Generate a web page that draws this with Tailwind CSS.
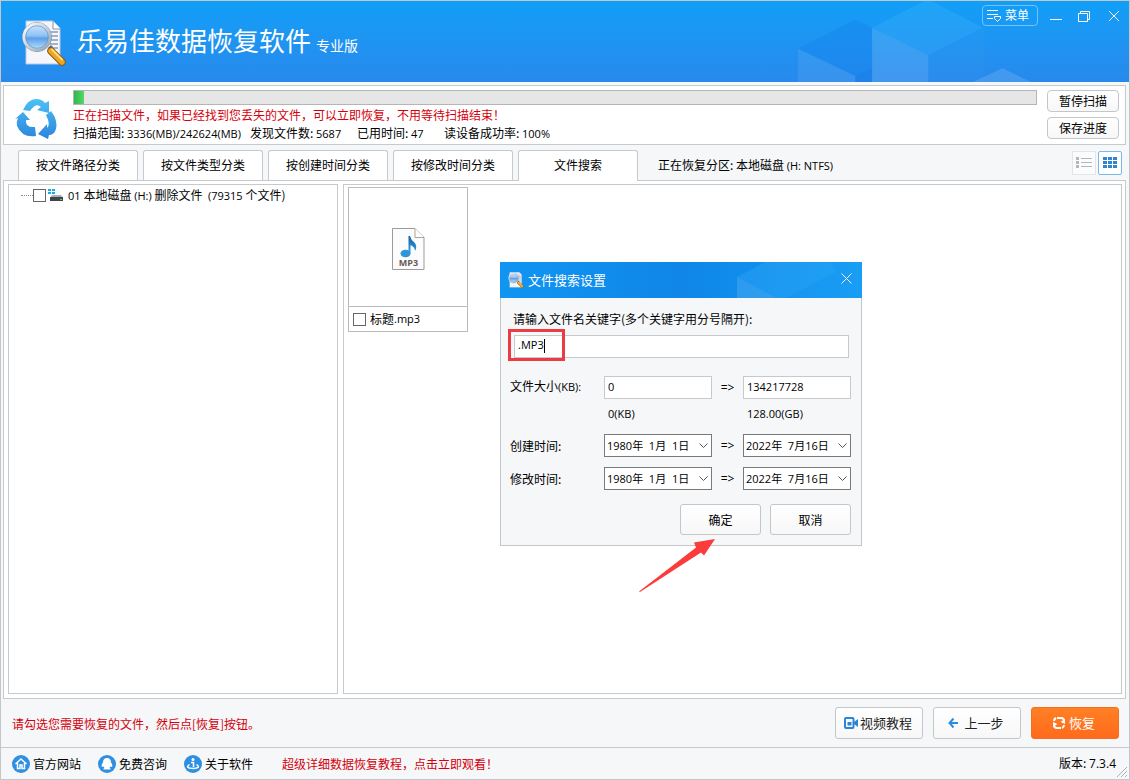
<!DOCTYPE html>
<html lang="zh-CN">
<head>
<meta charset="utf-8">
<meta name="viewport" content="width=device-width, initial-scale=1">
<title>乐易佳数据恢复软件</title>
<script src="https://cdn.jsdelivr.net/npm/@tailwindcss/browser@4"></script>
</head>
<body class="relative flex min-h-screen flex-col border border-[#c3c7ca] bg-[#f5f7f9] font-['Noto_Sans_CJK_SC',sans-serif] text-xs leading-4 text-black">

<svg class="absolute size-0" aria-hidden="true">
  <defs>
    <linearGradient id="lens" x1="0" y1="0" x2="0" y2="1"><stop offset="0" stop-color="#d9ecfd"/><stop offset=".45" stop-color="#8fc3f6"/><stop offset=".55" stop-color="#5f9eea"/><stop offset="1" stop-color="#c8f0ff"/></linearGradient>
    <linearGradient id="rim" x1="0" y1="0" x2="1" y2="1"><stop offset="0" stop-color="#ffffff"/><stop offset="1" stop-color="#8fa3bb"/></linearGradient>
    <linearGradient id="recycle" gradientUnits="userSpaceOnUse" x1="0" y1="0" x2="0" y2="42"><stop offset="0" stop-color="#4cc3f5"/><stop offset="1" stop-color="#2b83dd"/></linearGradient>
    <linearGradient id="note" x1="0" y1="0" x2="0" y2="1"><stop offset="0" stop-color="#1d5f9c"/><stop offset="1" stop-color="#2ea3e8"/></linearGradient>
    <symbol id="logo" viewBox="0 0 46 46">
      <path d="M5 1h27l7 7v36H5z" fill="#f4f6fc" stroke="#b9c6dd"/>
      <path d="M32 1v8h7" fill="#fff" stroke="#8292ae"/>
      <path d="M28 12h9M29 16h8M30 20h7M29 24h8M28 28h9" stroke="#8b9ab4" stroke-width="1.5"/>
      <circle cx="16" cy="17" r="14.5" fill="url(#lens)" stroke="#7388a3"/>
      <circle cx="16" cy="17" r="13" fill="none" stroke="url(#rim)" stroke-width="3"/>
      <circle cx="16" cy="17" r="11.3" fill="none" stroke="#6d8fb8" stroke-width=".7"/>
      <path d="M28 29l3-3" stroke="#5d6c80" stroke-width="3"/>
      <path d="M30 31l11 11" stroke="#8a5a12" stroke-width="7.5" stroke-linecap="round"/>
      <path d="M30 31l11 11" stroke="#f0a31d" stroke-width="5.5" stroke-linecap="round"/>
      <path d="M31 29.500l10 10" stroke="#ffe07c" stroke-width="1.800" stroke-linecap="round"/>
    </symbol>
  </defs>
</svg>

<header class="relative flex h-[81px] items-start justify-between bg-linear-to-b from-[#0f9ff8] to-[#2789ec] pl-5 text-white">
  <svg class="absolute top-0 right-0 h-full w-[340px]" viewBox="0 0 340 82" aria-hidden="true">
    <path d="M7 48L65 19l17 8v41l-17 8z" fill="#1583ee" opacity=".4"/>
    <path d="M7 48l58 28v6H7z" fill="#fff" opacity=".08"/>
    <path d="M65 76l17-8v14H65z" fill="#1173e6" opacity=".35"/>
    <path d="M82 27L135 0h7l52 27-55 28z" fill="#4fc4ff" opacity=".2"/>
    <path d="M82 27l57 28v27H82z" fill="#fff" opacity=".12"/>
    <path d="M139 55l57-28v55h-57z" fill="#fff" opacity=".02"/>
    <path d="M184 82l30-14 29 14z" fill="#fff" opacity=".13"/>
  </svg>
  <div class="relative flex items-center">
    <svg class="mt-[19px] size-[46px]" aria-hidden="true"><use href="#logo"/></svg>
    <h1 class="mt-3 ml-2.5 text-[26px] leading-8 font-normal">乐易佳数据恢复软件</h1>
    <span class="mt-[22px] ml-[5px] text-sm leading-5">专业版</span>
  </div>
  <div class="relative mt-1 mr-[9px] flex items-center">
    <button class="mr-3 flex h-[21px] w-14 items-center justify-center gap-1 rounded-sm border border-[#72c4fb] pr-1 pb-px">
      <svg class="size-[14px]" viewBox="0 0 14 14" fill="none" stroke="#fff" aria-hidden="true"><path d="M0 2.500h11M0 6.500h11M0 10.500h6M7.500 8.500h6v2l-3 3-3-3z"/></svg>菜单</button>
    <button aria-label="最小化" class="mr-4 w-3"><svg class="h-4 w-3" viewBox="0 0 12 16" stroke="#fff" fill="none"><path d="M0 11.500h12"/></svg></button>
    <button aria-label="还原" class="mr-[18px] w-3"><svg class="h-4 w-3" viewBox="0 0 12 16" stroke="#fff" fill="none"><path d="M.5 5.500h9v8h-9zM2.500 5.500v-2h9v8h-2"/></svg></button>
    <button aria-label="关闭" class="w-3"><svg class="h-4 w-3" viewBox="0 0 12 16" stroke="#fff" fill="none"><path d="M1 3l10 10M11 3L1 13"/></svg></button>
  </div>
</header>

<main class="flex flex-1 flex-col px-0.5 pt-[3px]">
  <section class="mr-px flex h-[60px] border border-[#c6cacd] bg-white">
    <svg class="mt-3 ml-2.5 h-[42px] w-11 shrink-0" viewBox="0 0 44 42" fill="url(#recycle)" aria-hidden="true">
      <path d="M9 12Q14 1 22 1q6 0 9 4l4-2v12l-12-3 4-3q-5-5-11 4z"/>
      <path d="M1 21l8-7 7 8h-4q-1 8 9 7l1 9Q8 40 3 28q-1-4 1-8z"/>
      <path d="M32 17l5-4q7 9 5 18-2 6-7 6l-1 4-10-5 9-10v4q4-3-1-13z"/>
    </svg>
    <div class="ml-[15px] min-w-0 flex-1">
      <div role="progressbar" aria-label="扫描进度" aria-valuenow="1" class="mt-1 h-[15px] border border-[#b5b5b5] bg-[#e6e6e6]"><div class="h-full w-[10px] bg-linear-to-r from-[#2fb84a] to-[#55d768]"></div></div>
      <p class="mt-px h-[18px] leading-[18px] text-[#d4000c]">正在扫描文件，如果已经找到您丢失的文件，可以立即恢复，不用等待扫描结束！</p>
      <p class="flex h-[18px] leading-[18px] whitespace-nowrap">
        <span class="w-[177px]">扫描范围: <span class="font-['Open_Sans'] text-[11px]">3336(MB)/242624(MB)</span></span>
        <span class="w-[107px]">发现文件数: <span class="font-['Open_Sans'] text-[11px]">5687</span></span>
        <span class="w-[87px]">已用时间: <span class="font-['Open_Sans'] text-[11px]">47</span></span>
        <span>读设备成功率: <span class="font-['Open_Sans'] text-[11px]">100%</span></span>
      </p>
    </div>
    <div class="mt-1 mr-1.5 ml-2.5 flex flex-col gap-[5px]">
      <button class="h-[22px] w-[72px] rounded-sm border border-[#c3c7ca] bg-linear-to-b from-white to-[#f7f7f7]">暂停扫描</button>
      <button class="h-[22px] w-[72px] rounded-sm border border-[#c3c7ca] bg-linear-to-b from-white to-[#f7f7f7]">保存进度</button>
    </div>
  </section>

  <nav class="relative z-10 mt-[5px] mr-px flex h-[31px] items-start gap-[5px] pl-[15px]">
    <button class="h-[30px] w-[120px] rounded-t-[3px] border border-b-0 border-[#c6cacd] bg-white pb-0.5">按文件路径分类</button>
    <button class="h-[30px] w-[120px] rounded-t-[3px] border border-b-0 border-[#c6cacd] bg-white pb-0.5">按文件类型分类</button>
    <button class="h-[30px] w-[120px] rounded-t-[3px] border border-b-0 border-[#c6cacd] bg-white pb-0.5">按创建时间分类</button>
    <button class="h-[30px] w-[120px] rounded-t-[3px] border border-b-0 border-[#c6cacd] bg-white pb-0.5">按修改时间分类</button>
    <button class="h-[31px] w-[120px] rounded-t-[3px] border border-b-0 border-[#c6cacd] bg-white pb-[3px]">文件搜索</button>
    <span class="ml-[15px] leading-[30px]">正在恢复分区: 本地磁盘 <span class="font-['Open_Sans'] text-[11px]">(H: NTFS)</span></span>
    <div class="mt-px mr-1 ml-auto flex gap-0.5">
      <button aria-label="列表" class="flex size-6 items-center justify-center border border-[#e3e6e8] bg-[#fbfcfd]"><svg class="h-3 w-4" viewBox="0 0 16 12" fill="#b4b7ba"><path d="M0 0h3v3H0zM0 4h3v3H0zM0 8h3v3H0zM5 1h11v1H5zM5 5h11v1H5zM5 9h11v1H5z"/></svg></button>
      <button aria-label="缩略图" class="flex size-6 items-center justify-center rounded-xs border border-[#79b9ea] bg-white"><svg class="h-3 w-[14px]" viewBox="0 0 14 12" fill="#2f86cf"><path d="M0 0h4v3H0zM5 0h4v3H5zM10 0h4v3h-4zM0 4h4v3H0zM5 4h4v3H5zM10 4h4v3h-4zM0 8h4v3H0zM5 8h4v3H5zM10 8h4v3h-4z"/></svg></button>
    </div>
  </nav>

  <section class="-mt-px mr-px flex flex-1 gap-[5px] border border-[#c6cacd] bg-white p-[3px] pb-1 pl-1">
    <div class="w-[330px] shrink-0 border border-[#c6cacd] pl-3">
      <label class="mt-0.5 flex h-4 items-center whitespace-nowrap">
        <span class="w-3 border-t border-dotted border-[#8a8a8a]"></span>
        <input type="checkbox" class="size-[13px] appearance-none border border-[#666] bg-white">
        <svg class="ml-0.5 h-[14px] w-4" viewBox="0 0 16 14" aria-hidden="true"><path d="M0 1h3v2H0zM4 1h3v2H4zM0 4h3v2H0zM4 4h3v2H4z" fill="#13aee4"/><path d="M4 7h9l2 3H2z" fill="#a9b0b4"/><path d="M2 9h13v4H2z" fill="#3e4649"/><path d="M12 11h2v1h-2z" fill="#43e06a"/></svg>
        <span class="ml-1 whitespace-pre"><span class="font-['Open_Sans'] text-[11px]">01 </span>本地磁盘 <span class="font-['Open_Sans'] text-[11px]">(H:) </span>删除文件  <span class="font-['Open_Sans'] text-[11px]">(79315 </span>个文件)</span>
      </label>
    </div>
    <div class="flex-1 border border-[#c6cacd] pt-0.5 pl-1">
      <div class="w-[120px] border border-[#bbb]">
        <div class="flex h-[118px] items-center justify-center pt-1">
          <svg class="h-[42px] w-[33px]" viewBox="0 0 33 42" role="img" aria-label="MP3">
            <path d="M.5 .5H23l9 9V41.500H.5z" fill="#fcfcfc" stroke="#9b9b9b"/>
            <path d="M23 .5v9h9" fill="#fff" stroke="#aaa39b"/>
            <path d="M16.500 8h1.500q1 4 4 6 4 4 1 9 0-4-4.500-6v8.500h-2z" fill="url(#note)"/>
            <ellipse cx="13.500" cy="25.500" rx="5" ry="3.800" fill="#2f94d8"/>
            <text x="16.500" y="38" text-anchor="middle" font-family="Open Sans" font-weight="700" font-size="9" fill="#655d58">MP3</text>
          </svg>
        </div>
        <label class="flex h-[25px] items-center border-t border-[#bbb] pl-1">
          <input type="checkbox" class="mr-1 size-[13px] appearance-none border border-[#666] bg-white">标题<span class="font-['Open_Sans'] text-[11px]">.mp3</span>
        </label>
      </div>
    </div>
  </section>
</main>

<section class="flex h-[49px] items-center gap-2.5 border-b border-[#c6cacd] pr-2.5 pl-[11px] text-[13px]">
  <p class="mt-0.5 mr-auto text-xs text-[#d4000c]">请勾选您需要恢复的文件，然后点[恢复]按钮。</p>
  <button class="flex h-8 w-[88px] items-center justify-center gap-0.5 rounded-[3px] border border-[#c3c7ca] bg-linear-to-b from-white to-[#f7f7f7] pr-0.5 text-[#222]">
    <svg class="h-3 w-[14px]" viewBox="0 0 14 12" aria-hidden="true"><rect x="1" y="1" width="8.500" height="10" rx="1" fill="none" stroke="#2a85d6" stroke-width="2"/><path d="M3.500 5h4v3.500h-4zM10 5l4-3v8l-4-3z" fill="#2a85d6"/></svg>视频教程</button>
  <button class="flex h-8 w-[88px] items-center justify-center gap-1.5 rounded-[3px] border border-[#c3c7ca] bg-linear-to-b from-white to-[#f7f7f7] pr-0.5 text-[#222]">
    <svg class="size-2.5" viewBox="0 0 10 10" fill="none" stroke="#2a8ce2" stroke-width="2" aria-hidden="true"><path d="M5.500 .5L1.500 5l4 4.500M1.500 5H10"/></svg>上一步</button>
  <button class="flex h-8 w-[88px] items-center justify-center gap-1 rounded-[3px] border border-[#f4701c] bg-linear-to-b from-[#ff8024] to-[#ff6a1c] pr-0.5 text-white">
    <svg class="h-[14px] w-3" viewBox="0 0 12 14" fill="none" stroke="#fff" stroke-width="2" aria-hidden="true"><path d="M4 2h4q3 0 3 3v1M8 12H4q-3 0-3-3V8"/><path d="M12 3v5L7.500 6zM0 11V6l4.500 2z" fill="#fff" stroke="none"/><path d="M1 5q0-2 2-3M11 9q0 2-2 3"/></svg>恢复</button>
</section>

<footer class="relative flex h-[31px] items-center pr-[13px] pl-[11px]">
  <a href="#" class="mr-[17px] flex items-center gap-[3px]"><svg class="size-[18px]" viewBox="0 0 18 18" aria-hidden="true"><circle cx="9" cy="9" r="9" fill="#2f8fe0"/><path d="M3.500 9L9 4l5.500 5M5.500 8v5.500H8V10h2v3.500h2.500V8" fill="none" stroke="#fff" stroke-width="1.500"/></svg>官方网站</a>
  <a href="#" class="mr-[17px] flex items-center gap-[3px]"><svg class="size-[18px]" viewBox="0 0 18 18" aria-hidden="true"><circle cx="9" cy="9" r="9" fill="#2f8fe0"/><path d="M9 3q4 0 4 4.500 2 2.500 1 4.500l-1.500-.5-1 1.500q1.500.5 1 1.500h-7q-.5-1 1-1.500l-1-1.500L4 12q-1-2 1-4.500Q5 3 9 3z" fill="#fff"/></svg>免费咨询</a>
  <a href="#" class="flex items-center gap-[3px]"><svg class="size-[18px]" viewBox="0 0 18 18" aria-hidden="true"><circle cx="9" cy="9" r="9" fill="#2f8fe0"/><circle cx="9" cy="4.500" r="1.500" fill="#fff"/><path d="M7 7.500h2.500V12M5.500 9.500q-5 3.500 3.500 4 8.500-.5 3.500-4" fill="none" stroke="#fff" stroke-width="1.500"/></svg>关于软件</a>
  <a href="#" class="ml-[29px] text-[#d4000c]">超级详细数据恢复教程，点击立即观看！</a>
  <span class="ml-auto">版本: <span class="font-['Open_Sans']">7.3.4</span></span>
  <svg class="absolute right-0.5 bottom-0.5 size-2.5" viewBox="0 0 10 10" stroke="#aeb2b5" aria-hidden="true"><path d="M0 10L10 0M4 10l6-6M8 10l2-2"/></svg>
</footer>

<div role="dialog" aria-labelledby="dlg-title" class="absolute top-[261px] left-[499px] z-20 w-[362px] border border-[#c3c7ca] bg-[#f5f7f9]">
  <div class="relative -mx-px -mt-px flex h-9 items-center bg-linear-to-r from-[#1195f2] via-[#0f86e8] to-[#129af5] pl-2 text-[13px] text-white">
    <svg class="absolute top-0 right-0 h-full w-[125px]" viewBox="0 0 125 36" aria-hidden="true"><path d="M0 15L28 0h97v36H0z" fill="#fff" opacity=".03"/><path d="M0 15l40 21H0z" fill="#fff" opacity=".1"/><path d="M0 15L28 0h65l6 10-50 26h-9z" fill="#4cc4ff" opacity=".12"/></svg>
    <svg class="relative size-4" aria-hidden="true"><use href="#logo"/></svg>
    <h2 id="dlg-title" class="relative ml-1">文件搜索设置</h2>
    <button aria-label="关闭" class="relative mr-2.5 mb-1 ml-auto"><svg class="size-[11px]" viewBox="0 0 11 11" stroke="#fff" fill="none"><path d="M.5 .5l10 10M10.500 .5l-10 10"/></svg></button>
  </div>
  <form class="pr-[10px] pb-[10px] pl-[9px]">
    <label for="kw" class="mt-[13px] block pl-[3px]">请输入文件名关键字(多个关键字用分号隔开):</label>
    <div class="relative mt-2 mr-0.5 ml-1">
      <input id="kw" type="text" value=".MP3" class="block h-[23px] w-full border border-[#c6cacd] bg-white px-[3px] pb-1 font-['Open_Sans'] text-[11px]">
      <span class="absolute top-1 left-[30px] h-3.5 w-px bg-black"></span>
      <span class="absolute -top-[6px] -left-[6px] h-8 w-[57px] border-3 border-[#ee3a42]"></span>
    </div>
    <div class="mt-[18px] grid grid-cols-[94px_1fr_31px_1fr] items-center">
      <label for="smin" class="pb-0.5">文件大小<span class="font-['Open_Sans'] text-[11px]">(KB):</span></label>
      <input id="smin" type="text" value="0" class="h-[23px] w-full border border-[#c6cacd] bg-white px-[3px] pb-0.5 font-['Open_Sans'] text-[11px]">
      <span class="text-center font-['Open_Sans']">=&gt;</span>
      <input aria-label="最大文件大小" type="text" value="134217728" class="h-[23px] w-full border border-[#c6cacd] bg-white px-[3px] pb-0.5 font-['Open_Sans'] text-[11px]">
      <span class="col-start-2 mt-[7px] h-7 pl-1 font-['Open_Sans'] text-[11px]">0(KB)</span>
      <span class="col-start-4 mt-[7px] h-7 pl-1 font-['Open_Sans'] text-[11px]">128.00(GB)</span>
    </div>
    <div class="grid grid-cols-[94px_1fr_31px_1fr] items-center gap-y-[10px]">
      <label for="c1">创建时间:</label>
      <div class="relative"><select id="c1" class="block h-[23px] w-full appearance-none border border-[#7a7a7a] bg-white pl-0.5 font-['Open_Sans','Noto_Sans_CJK_SC'] text-[11px] whitespace-pre"><option>1980年&nbsp; 1月&nbsp; 1日</option></select><svg class="pointer-events-none absolute top-[9px] right-1 h-[6px] w-[9px]" viewBox="0 0 9 6" fill="none" stroke="#555"><path d="M.5 .5l4 4 4-4"/></svg></div>
      <span class="text-center font-['Open_Sans']">=&gt;</span>
      <div class="relative"><select aria-label="创建时间止" class="block h-[23px] w-full appearance-none border border-[#7a7a7a] bg-white pl-0.5 font-['Open_Sans','Noto_Sans_CJK_SC'] text-[11px] whitespace-pre"><option>2022年&nbsp; 7月16日</option></select><svg class="pointer-events-none absolute top-[9px] right-1 h-[6px] w-[9px]" viewBox="0 0 9 6" fill="none" stroke="#555"><path d="M.5 .5l4 4 4-4"/></svg></div>
      <label for="m1">修改时间:</label>
      <div class="relative"><select id="m1" class="block h-[23px] w-full appearance-none border border-[#7a7a7a] bg-white pl-0.5 font-['Open_Sans','Noto_Sans_CJK_SC'] text-[11px] whitespace-pre"><option>1980年&nbsp; 1月&nbsp; 1日</option></select><svg class="pointer-events-none absolute top-[9px] right-1 h-[6px] w-[9px]" viewBox="0 0 9 6" fill="none" stroke="#555"><path d="M.5 .5l4 4 4-4"/></svg></div>
      <span class="text-center font-['Open_Sans']">=&gt;</span>
      <div class="relative"><select aria-label="修改时间止" class="block h-[23px] w-full appearance-none border border-[#7a7a7a] bg-white pl-0.5 font-['Open_Sans','Noto_Sans_CJK_SC'] text-[11px] whitespace-pre"><option>2022年&nbsp; 7月16日</option></select><svg class="pointer-events-none absolute top-[9px] right-1 h-[6px] w-[9px]" viewBox="0 0 9 6" fill="none" stroke="#555"><path d="M.5 .5l4 4 4-4"/></svg></div>
    </div>
    <div class="mt-3.5 flex justify-end gap-[9px]">
      <button type="button" class="h-[31px] w-[81px] rounded-[3px] border border-[#c3c7ca] bg-linear-to-b from-white to-[#f7f7f7]">确定</button>
      <button type="button" class="h-[31px] w-[81px] rounded-[3px] border border-[#c3c7ca] bg-linear-to-b from-white to-[#f7f7f7]">取消</button>
    </div>
  </form>
</div>
<svg class="absolute top-[537px] left-[638px] z-30 h-[55px] w-[78px]" viewBox="0 0 78 55" fill="#fb3b3c" aria-hidden="true"><path d="M0 53.500L57 9.500l-2-5L76 1 65 17.500l-3-3L1 54z"/></svg>
</body>
</html>
